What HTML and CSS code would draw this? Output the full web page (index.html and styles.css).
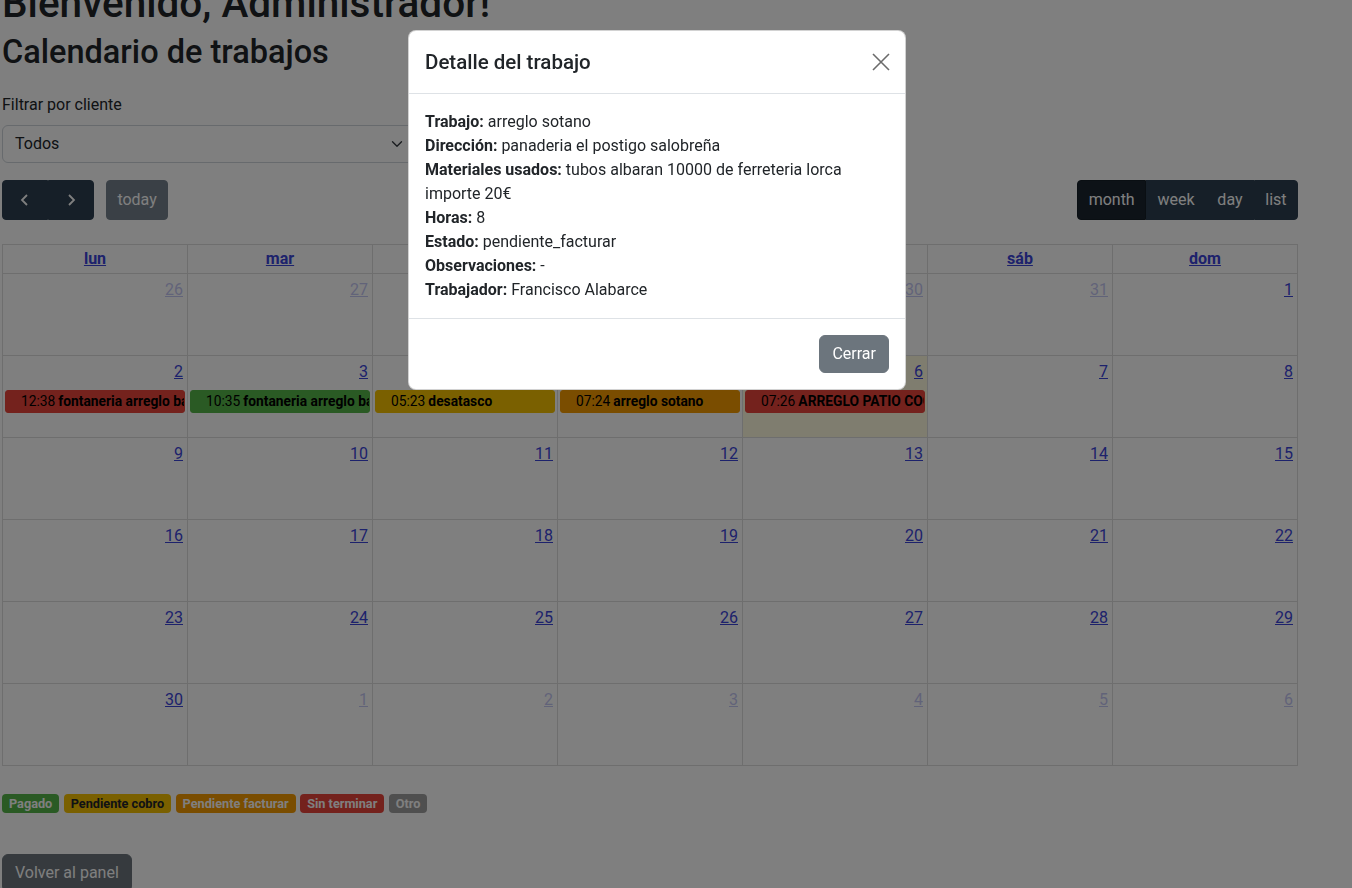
FILE: index.html
```html
<!DOCTYPE html>
<html lang="es">
<head>
<meta charset="utf-8">
<title>Calendario de trabajos</title>
<link rel="stylesheet" href="styles.css">
</head>
<body>
<main class="page">
  <h1 class="welcome">Bienvenido, Administrador!</h1>
  <h2 class="title">Calendario de trabajos</h2>
  <div class="filter">
    <label class="filter-label">Filtrar por cliente</label>
    <div class="select">
      <span>Todos</span>
      <svg class="chev" width="16" height="16" viewBox="0 0 16 16"><path d="M2 5l6 6 6-6" fill="none" stroke="#343a40" stroke-width="1.8" stroke-linecap="round" stroke-linejoin="round"/></svg>
    </div>
  </div>

  <div class="toolbar">
    <div class="tb-left">
      <div class="btn-group">
        <button class="fc-btn icon-btn" aria-label="prev"><svg width="16" height="16" viewBox="0 0 16 16"><path d="M10 3L5 8l5 5" fill="none" stroke="#fff" stroke-width="1.8"/></svg></button>
        <button class="fc-btn icon-btn" aria-label="next"><svg width="16" height="16" viewBox="0 0 16 16"><path d="M6 3l5 5-5 5" fill="none" stroke="#fff" stroke-width="1.8"/></svg></button>
      </div>
      <button class="fc-btn today-btn" disabled>today</button>
    </div>
    <div class="btn-group">
      <button class="fc-btn active">month</button>
      <button class="fc-btn">week</button>
      <button class="fc-btn">day</button>
      <button class="fc-btn">list</button>
    </div>
  </div>

  <table class="cal">
    <thead>
      <tr>
        <th><a href="#">lun</a></th><th><a href="#">mar</a></th><th><a href="#">mié</a></th><th><a href="#">jue</a></th><th><a href="#">vie</a></th><th><a href="#">sáb</a></th><th><a href="#">dom</a></th>
      </tr>
    </thead>
    <tbody>
      <tr>
        <td><div class="day other"><a class="num" href="#">26</a></div></td>
        <td><div class="day other"><a class="num" href="#">27</a></div></td>
        <td><div class="day other"><a class="num" href="#">28</a></div></td>
        <td><div class="day other"><a class="num" href="#">29</a></div></td>
        <td><div class="day other"><a class="num" href="#">30</a></div></td>
        <td><div class="day other"><a class="num" href="#">31</a></div></td>
        <td><div class="day"><a class="num" href="#">1</a></div></td>
      </tr>
      <tr>
        <td><div class="day"><a class="num" href="#">2</a><div class="ev ev-red"><span class="t">12:38</span><b>fontaneria arreglo baño</b></div></div></td>
        <td><div class="day"><a class="num" href="#">3</a><div class="ev ev-green"><span class="t">10:35</span><b>fontaneria arreglo baño</b></div></div></td>
        <td><div class="day"><a class="num" href="#">4</a><div class="ev ev-yellow"><span class="t">05:23</span><b>desatasco</b></div></div></td>
        <td><div class="day"><a class="num" href="#">5</a><div class="ev ev-orange"><span class="t">07:24</span><b>arreglo sotano</b></div></div></td>
        <td class="is-today"><div class="day"><a class="num" href="#">6</a><div class="ev ev-red"><span class="t">07:26</span><b>ARREGLO PATIO COCINA</b></div></div></td>
        <td><div class="day"><a class="num" href="#">7</a></div></td>
        <td><div class="day"><a class="num" href="#">8</a></div></td>
      </tr>
      <tr>
        <td><div class="day"><a class="num" href="#">9</a></div></td>
        <td><div class="day"><a class="num" href="#">10</a></div></td>
        <td><div class="day"><a class="num" href="#">11</a></div></td>
        <td><div class="day"><a class="num" href="#">12</a></div></td>
        <td><div class="day"><a class="num" href="#">13</a></div></td>
        <td><div class="day"><a class="num" href="#">14</a></div></td>
        <td><div class="day"><a class="num" href="#">15</a></div></td>
      </tr>
      <tr>
        <td><div class="day"><a class="num" href="#">16</a></div></td>
        <td><div class="day"><a class="num" href="#">17</a></div></td>
        <td><div class="day"><a class="num" href="#">18</a></div></td>
        <td><div class="day"><a class="num" href="#">19</a></div></td>
        <td><div class="day"><a class="num" href="#">20</a></div></td>
        <td><div class="day"><a class="num" href="#">21</a></div></td>
        <td><div class="day"><a class="num" href="#">22</a></div></td>
      </tr>
      <tr>
        <td><div class="day"><a class="num" href="#">23</a></div></td>
        <td><div class="day"><a class="num" href="#">24</a></div></td>
        <td><div class="day"><a class="num" href="#">25</a></div></td>
        <td><div class="day"><a class="num" href="#">26</a></div></td>
        <td><div class="day"><a class="num" href="#">27</a></div></td>
        <td><div class="day"><a class="num" href="#">28</a></div></td>
        <td><div class="day"><a class="num" href="#">29</a></div></td>
      </tr>
      <tr>
        <td><div class="day"><a class="num" href="#">30</a></div></td>
        <td><div class="day other"><a class="num" href="#">1</a></div></td>
        <td><div class="day other"><a class="num" href="#">2</a></div></td>
        <td><div class="day other"><a class="num" href="#">3</a></div></td>
        <td><div class="day other"><a class="num" href="#">4</a></div></td>
        <td><div class="day other"><a class="num" href="#">5</a></div></td>
        <td><div class="day other"><a class="num" href="#">6</a></div></td>
      </tr>
    </tbody>
  </table>

  <div class="legend">
    <span class="badge b-green">Pagado</span>
    <span class="badge b-yellow">Pendiente cobro</span>
    <span class="badge b-orange">Pendiente facturar</span>
    <span class="badge b-red">Sin terminar</span>
    <span class="badge b-gray">Otro</span>
  </div>

  <button class="back">Volver al panel</button>
</main>

<div class="backdrop"></div>

<div class="modal" role="dialog">
  <div class="modal-header">
    <h5 class="modal-title">Detalle del trabajo</h5>
    <button class="close" aria-label="Cerrar"><svg width="18" height="18" viewBox="0 0 18 18"><path d="M1 1l16 16M17 1L1 17" stroke="#6b6b6b" stroke-width="1.6" fill="none"/></svg></button>
  </div>
  <div class="modal-body">
    <p><b>Trabajo:</b> arreglo sotano</p>
    <p><b>Dirección:</b> panaderia el postigo salobreña</p>
    <p><b>Materiales usados:</b> tubos albaran 10000 de ferreteria lorca importe 20€</p>
    <p><b>Horas:</b> 8</p>
    <p><b>Estado:</b> pendiente_facturar</p>
    <p><b>Observaciones:</b> -</p>
    <p><b>Trabajador:</b> Francisco Alabarce</p>
  </div>
  <div class="modal-footer">
    <button class="btn-secondary">Cerrar</button>
  </div>
</div>
</body>
</html>
```

FILE: styles.css
```css
* { box-sizing: border-box; }

html, body {
  margin: 0;
  padding: 0;
  background: #fff;
  color: #212529;
  font-family: Roboto, "Noto Sans", sans-serif;
  font-size: 16px;
  line-height: 1.5;
  overflow: hidden;
}

.page {
  width: 1296px;
  margin: -21px 0 0 2px;
}

.welcome {
  font-size: 40.5px;
  font-weight: 500;
  line-height: 48px;
  margin: 0 0 6px;
}

.title {
  font-size: 32.5px;
  font-weight: 500;
  line-height: 38px;
  margin: 0 0 22px;
}

.filter {
  margin-bottom: 17px;
}

.filter-label {
  display: block;
  margin-bottom: 8px;
}

.select {
  width: 414px;
  height: 38px;
  border: 1px solid #ced4da;
  border-radius: 6px;
  padding: 6px 12px;
  display: flex;
  align-items: center;
  justify-content: space-between;
}

.chev { width: 12px; height: 12px; }

.toolbar {
  display: flex;
  justify-content: space-between;
  align-items: center;
  margin-bottom: 24px;
}

.tb-left { display: flex; gap: 12px; }

.btn-group { display: flex; }

.fc-btn {
  font-family: inherit;
  font-size: 16px;
  line-height: 1.5;
  padding: 6.4px 10.4px;
  color: #fff;
  background: #2c3e50;
  border: 1px solid #2c3e50;
  border-radius: 0;
  height: 40px;
}

.btn-group .fc-btn:first-child { border-radius: 4px 0 0 4px; }
.btn-group .fc-btn:last-child { border-radius: 0 4px 4px 0; }

.fc-btn.active { background: #1a252f; border-color: #151e27; }

.icon-btn {
  width: 46px;
  display: flex;
  align-items: center;
  justify-content: center;
}

.today-btn {
  border-radius: 4px;
  opacity: 0.65;
}

.cal {
  width: 1296px;
  table-layout: fixed;
  border-collapse: collapse;
  border: 1px solid #ddd;
}

.cal th, .cal td {
  border: 1px solid #ddd;
  padding: 0;
}

.cal th {
  padding: 2px 4px;
  text-align: center;
  font-weight: 700;
  line-height: 24px;
}

.cal a { color: #3a44d8; text-decoration: underline; }

.cal td { vertical-align: top; }
.cal td.is-today { background: #fffbdf; }

.day {
  height: 81px;
  overflow: hidden;
}

.num {
  display: block;
  text-align: right;
  padding: 4px;
  width: fit-content;
  margin-left: auto;
  line-height: 24px;
}

.other .num { opacity: 0.3; }

.ev {
  margin: 2px 2px 0;
  height: 23px;
  border-radius: 3px;
  border: 1px solid;
  display: flex;
  align-items: center;
  padding-left: 15px;
  font-size: 13.8px;
  white-space: nowrap;
  overflow: hidden;
  color: #000;
}

.ev .t { margin-right: 3px; }
.ev b { font-weight: 700; }

.ev-red { background: #e9443a; border-color: #e9443a; }
.ev-green { background: #55b448; border-color: #55b448; }
.ev-yellow { background: #f5c000; border-color: #f5c000; }
.ev-orange { background: #f59a00; border-color: #f59a00; }

.legend {
  display: flex;
  gap: 4.5px;
  margin-top: 28px;
}

.badge {
  display: inline-block;
  font-size: 12.7px;
  font-weight: 700;
  line-height: 12px;
  padding: 3.5px 7px;
  border-radius: 4px;
  color: #fff;
}

.b-green { background: #55b448; }
.b-yellow { background: #f5c000; color: #212529; }
.b-orange { background: #f59a00; }
.b-red { background: #e9443a; }
.b-gray { background: #9e9e9e; }

.back {
  margin-top: 41px;
  font-family: inherit;
  font-size: 16px;
  line-height: 1.5;
  padding: 6px 12px;
  color: #fff;
  background: #6c757d;
  border: 1px solid #6c757d;
  border-radius: 6px;
}

.backdrop {
  position: fixed;
  inset: 0;
  background: rgba(0, 0, 0, 0.5);
}

.modal {
  position: fixed;
  top: 30px;
  left: 408px;
  width: 498px;
  background: #fff;
  border: 1px solid rgba(0, 0, 0, 0.175);
  border-radius: 8px;
}

.modal-header {
  display: flex;
  align-items: center;
  justify-content: space-between;
  padding: 16px;
  border-bottom: 1px solid #dee2e6;
}

.modal-title {
  margin: 0;
  font-size: 20.5px;
  font-weight: 500;
  line-height: 30px;
}

.close {
  background: none;
  border: 0;
  padding: 0;
  width: 18px;
  height: 18px;
  margin-right: -1px;
}

.modal-body {
  padding: 16px;
}

.modal-body p { margin: 0; }
.modal-body b { font-weight: 700; }

.modal-footer {
  display: flex;
  justify-content: flex-end;
  padding: 12px;
  border-top: 1px solid #dee2e6;
}

.btn-secondary {
  margin: 4px;
  font-family: inherit;
  font-size: 16px;
  line-height: 1.5;
  padding: 6px 12px;
  color: #fff;
  background: #6c757d;
  border: 1px solid #6c757d;
  border-radius: 6px;
}
```
